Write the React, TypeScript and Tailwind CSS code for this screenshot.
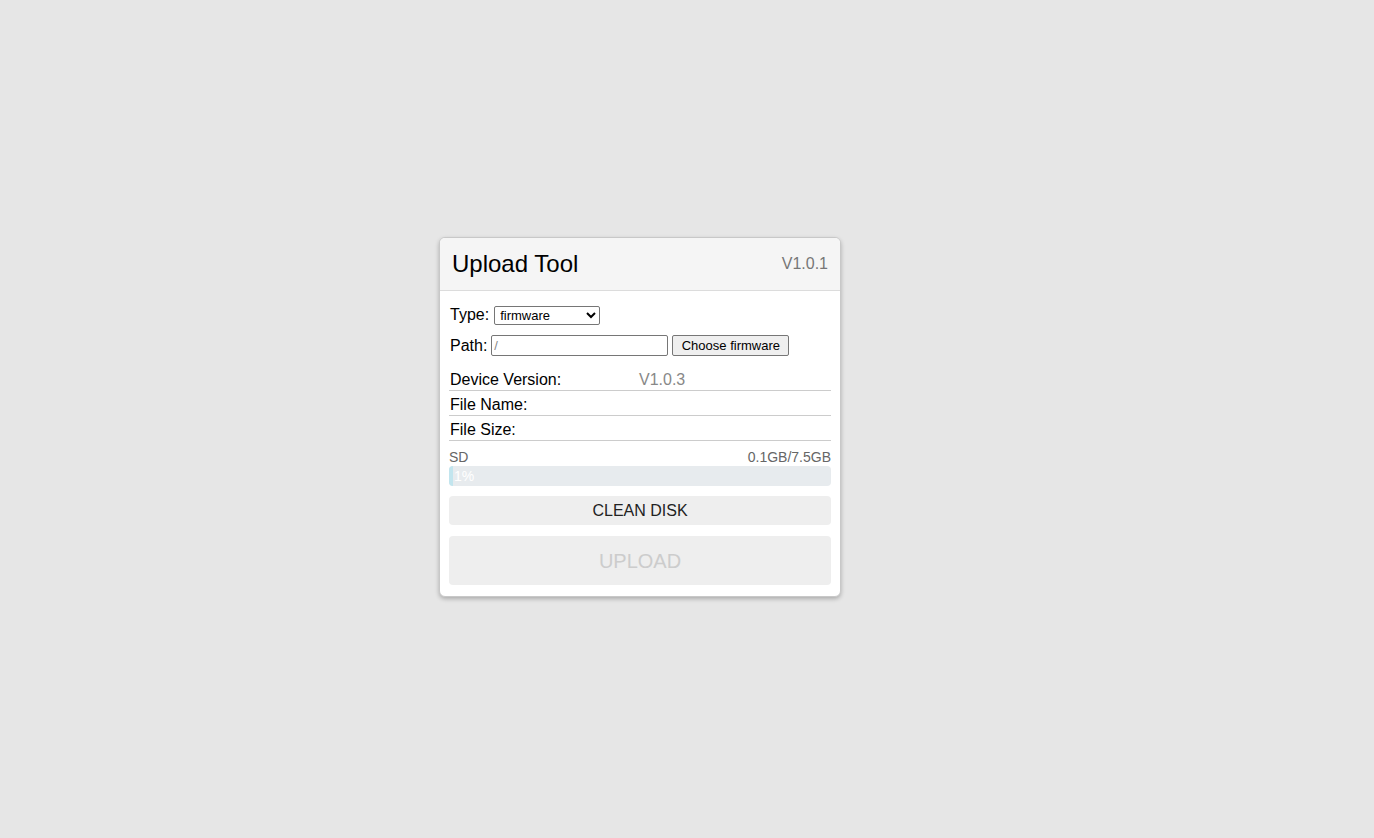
import React from "react";

export default function App() {
  return (
    <div className="min-h-[838px] w-full bg-[#e6e6e6] pt-[237px]" style={{ fontFamily: '"Liberation Sans", Arial, sans-serif' }}>
      <div className="ml-[439px] w-[402px] bg-white border border-[#c8c8c8] rounded-[6px] shadow-[0_2px_4px_rgba(0,0,0,0.25)] overflow-hidden">
        <div className="h-[53px] bg-[#f5f5f5] border-b border-[#dcdcdc] flex items-center justify-between pl-[12px] pr-[12px]">
          <span className="text-[24px] text-black">Upload Tool</span>
          <span className="text-[16px] text-[#777]">V1.0.1</span>
        </div>
        <div className="px-[9px] pt-[14px] pb-[11px]">
          <div className="flex items-center h-[20px] text-[16px] text-black pl-[1px]">
            <span>Type:</span>
            <select className="ml-[5px] w-[106px] h-[19px] border border-[#767676] rounded-[2px] text-[13px] pl-[1px] bg-white text-black" defaultValue="firmware">
              <option value="firmware">firmware</option>
            </select>
          </div>
          <div className="flex items-center h-[21px] mt-[10px] text-[16px] text-black pl-[1px]">
            <span>Path:</span>
            <input
              className="ml-[4px] w-[177px] h-[21px] border border-[#767676] rounded-[2px] text-[13px] px-[2px] text-[#888]"
              defaultValue="/"
            />
            <button className="ml-[4px] w-[117px] h-[21px] border border-[#767676] rounded-[2px] bg-[#efefef] text-[13px] text-black">
              Choose firmware
            </button>
          </div>
          <div className="mt-[10px] text-[16px] text-black">
            <div className="flex items-center h-[25px] border-b border-[#ccc] pl-[1px] pt-[3px]">
              <span className="w-[189px]">Device Version:</span>
              <span className="text-[#888]">V1.0.3</span>
            </div>
            <div className="flex items-center h-[25px] border-b border-[#ccc] pl-[1px] pt-[4px]">
              <span>File Name:</span>
            </div>
            <div className="flex items-center h-[25px] border-b border-[#ccc] pl-[1px] pt-[4px]">
              <span>File Size:</span>
            </div>
          </div>
          <div className="flex justify-between items-center text-[14px] text-[#666] mt-[6px] h-[18px] pt-[3px]">
            <span>SD</span>
            <span>0.1GB/7.5GB</span>
          </div>
          <div className="relative mt-[1px] h-[20px] bg-[#e7ebee] rounded-[4px] overflow-hidden">
            <div className="h-full bg-[#c2e5ee]" style={{ width: "1%" }} />
            <span className="absolute left-[5px] top-0 h-full flex items-center text-[14px] text-white">1%</span>
          </div>
          <button className="mt-[10px] w-full h-[29px] bg-[#eeeeee] rounded-[4px] text-[16px] text-[#222]">
            CLEAN DISK
          </button>
          <button className="mt-[11px] w-full h-[49px] bg-[#eeeeee] rounded-[4px] text-[20px] text-[#ccc]">
            UPLOAD
          </button>
        </div>
      </div>
    </div>
  );
}
